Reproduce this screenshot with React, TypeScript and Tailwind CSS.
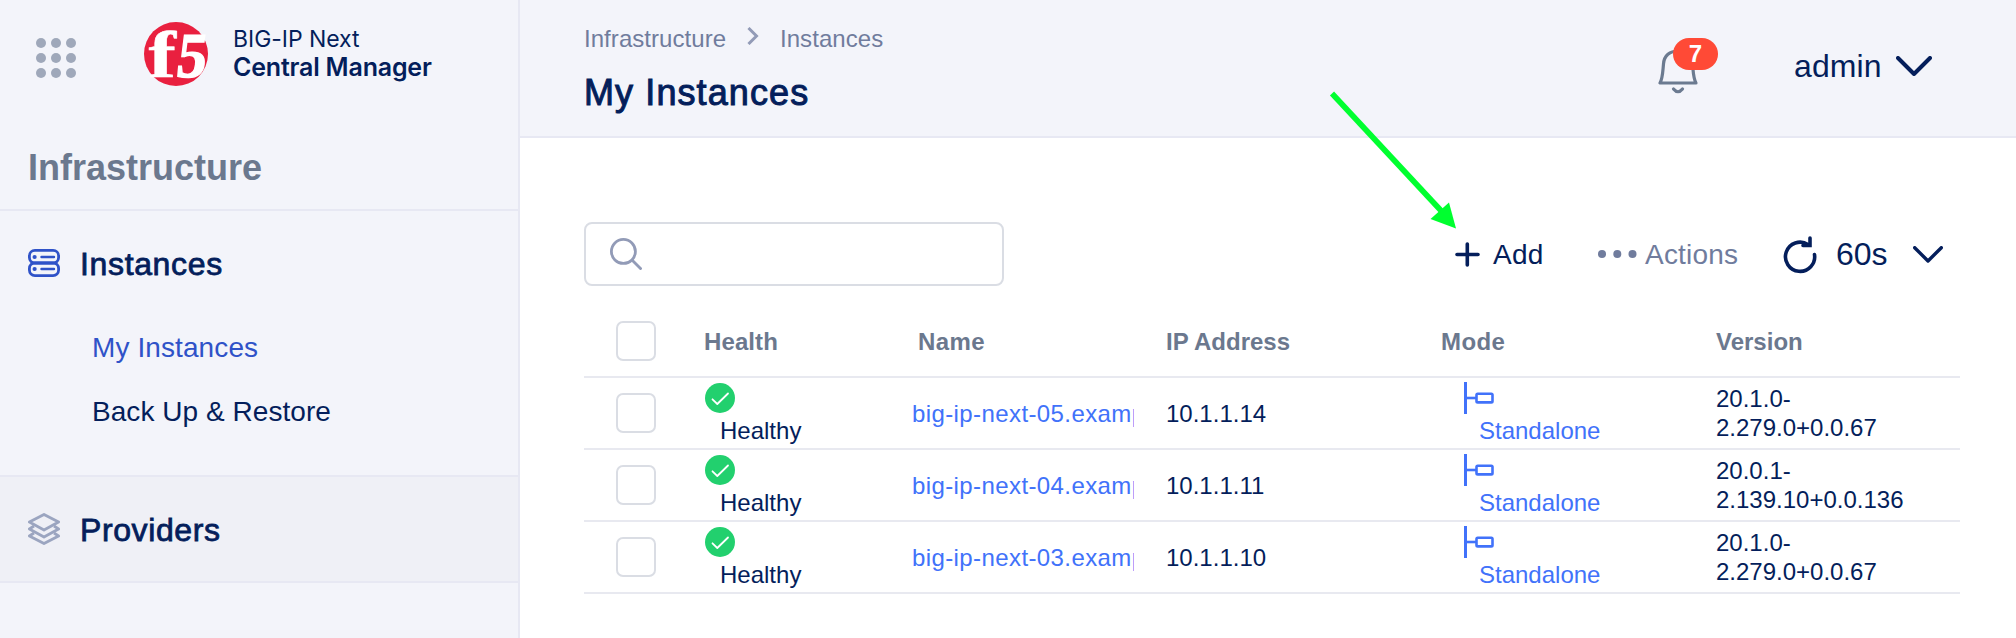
import type { ReactNode } from "react";

const NAVY = "#041e5b";

function Checkbox() {
  return <span className="block size-10 rounded-[7px] border-2 border-[#dadde4] bg-white" />;
}

function Check() {
  return (
    <svg width="30" height="30" viewBox="0 0 30 30" className="ml-px block" fill="none">
      <circle cx="15" cy="15" r="15" fill="#22d06e" />
      <path d="M7.5 16.3 12.3 21 23 10.5" stroke="#fff" strokeWidth="1.8" strokeLinecap="round" strokeLinejoin="round" />
    </svg>
  );
}

function Standalone() {
  return (
    <svg width="30" height="32" viewBox="0 0 30 32" className="ml-px block" fill="none" stroke="#4172fa">
      <path d="M1.500 0V32" strokeWidth="3" />
      <path d="M2 16H12" strokeWidth="2.600" />
      <rect x="12.500" y="11.800" width="16" height="8.600" rx="1.200" strokeWidth="2.600" />
    </svg>
  );
}

const rows = [
  ["big-ip-next-05.examp", "10.1.1.14", "20.1.0-", "2.279.0+0.0.67"],
  ["big-ip-next-04.examp", "10.1.1.11", "20.0.1-", "2.139.10+0.0.136"],
  ["big-ip-next-03.examp", "10.1.1.10", "20.1.0-", "2.279.0+0.0.67"],
];

const grid = "grid grid-cols-[120px_208px_254px_275px_275px_244px]";

function Head({ children, className = "" }: { children: ReactNode; className?: string }) {
  return <div className={"pt-[22px] text-[24px] leading-7 font-bold text-[#6b788e] " + className}>{children}</div>;
}

export default function App() {
  return (
    <div className="relative flex h-[638px] w-[2016px] overflow-hidden bg-white font-['Liberation_Sans',Arial,sans-serif] text-[#041e5b]">
      <aside className="flex w-[520px] shrink-0 flex-col border-r-2 border-[#e7e8f3] bg-[#f3f4fa]">
        <div className="flex h-[130px] shrink-0">
          <svg width="40" height="40" viewBox="0 0 40 40" className="mt-[38px] ml-9 shrink-0" fill="#9fa8ba">
            {[5, 20, 35].map((y) => [5, 20, 35].map((x) => <circle key={x + "-" + y} cx={x} cy={y} r="5" />))}
          </svg>
          <svg width="64" height="64" viewBox="0 0 64 64" className="mt-[22px] ml-[68px] shrink-0 overflow-visible">
            <circle cx="32" cy="32" r="32" fill="#e9203f" />
            <g fill="#fff" stroke="#fff" strokeWidth="0.500" className="font-['Liberation_Serif',serif] font-bold">
              <text transform="translate(4.500 54.500) scale(1.250 1)" fontSize="66">f</text>
              <text transform="translate(31 54.500) skewX(-7) scale(0.930 1)" fontSize="64" strokeWidth="1.400">5</text>
            </g>
          </svg>
          <div className="ml-[25px] pt-[25px] font-['Inter',sans-serif] leading-7">
            <div className="text-[23px] tracking-[-0.05px]">BIG-IP Next</div>
            <div className="text-[25px] font-semibold tracking-[-0.2px]">Central Manager</div>
          </div>
        </div>
        <div className="h-[81px] shrink-0 border-b-2 border-[#e7e8f3] pt-[18px] pl-7 text-[36px] leading-10 font-bold text-[#6b788e]">Infrastructure</div>
        <div className="h-[266px] shrink-0 border-b-2 border-[#e7e8f3] pl-7">
          <div className="flex items-center gap-5 pt-[33px]">
            <svg width="32" height="28" viewBox="0 0 32 28" className="-mt-[2px]" fill="none" stroke="#2f52c8" strokeWidth="2.800">
              <rect x="1.400" y="1.400" width="29.200" height="12.600" rx="5.500" />
              <rect x="1.400" y="14" width="29.200" height="12.600" rx="5.500" />
              <path d="M13.500 8H26M13.500 20H26" strokeWidth="2.400" strokeLinecap="round" />
              <circle cx="6.600" cy="8" r="2.100" fill="#2f52c8" stroke="none" />
              <circle cx="6.600" cy="20" r="2.100" fill="#2f52c8" stroke="none" />
            </svg>
            <span className="text-[32px] leading-10 tracking-[0.65px] [-webkit-text-stroke:0.8px]">Instances</span>
          </div>
          <div className="pt-[48px] pl-16 text-[28px] leading-8 tracking-[0.1px] text-[#2f52c8]">My Instances</div>
          <div className="pt-8 pl-16 text-[28px] leading-8 tracking-[0.05px]">Back Up &amp; Restore</div>
        </div>
        <div className="flex h-[106px] shrink-0 items-center gap-5 border-b-2 border-[#e7e8f3] bg-[#eff0f6] pl-7">
          <svg width="32" height="32" viewBox="0 0 32 32" fill="none" stroke="#9ba5c0" strokeWidth="2.800" strokeLinejoin="round">
            <path d="M16 1.400 30.600 9 16 17 1.400 9Z" />
            <path d="M6 13 1.400 16 16 24 30.600 16 26 13" />
            <path d="M6 20 1.400 23 16 30.600 30.600 23 26 20" />
          </svg>
          <span className="pt-px text-[32px] leading-10 tracking-[0.6px] [-webkit-text-stroke:0.8px]">Providers</span>
        </div>
      </aside>

      <main className="flex min-w-0 flex-1 flex-col">
        <header className="flex h-[138px] shrink-0 border-b-2 border-[#e7e8f3] bg-[#f3f4fa] pl-16">
          <div className="w-[1074px] pt-6">
            <div className="flex text-[24px] leading-[30px] tracking-[0.05px] text-[#707c9d]">
              <span className="w-[163px]">Infrastructure</span>
              <svg width="12" height="18" viewBox="0 0 12 18" className="mt-[3px] mr-[21px]" fill="none" stroke="#929bb7" strokeWidth="3">
                <path d="M1.500 1 9.500 9 1.500 17" />
              </svg>
              <span>Instances</span>
            </div>
            <h1 className="pt-[19px] text-[36px] leading-10 tracking-[1.1px] [-webkit-text-stroke:1px]">My Instances</h1>
          </div>
          <div className="relative mt-[38px] h-16 w-[136px]">
            <svg width="40" height="46" viewBox="0 0 40 46" className="mt-[11px]" fill="none" stroke="#6b7a90" strokeWidth="3.200" strokeLinecap="round" strokeLinejoin="round">
              <path d="M2 34H38C35.500 30 35.500 26 34.500 15C34 6.500 28 2 20 2S6 6.500 5.500 15C4.500 26 4.500 30 2 34Z" />
              <path d="M15.500 40Q20 45.500 24.500 40" />
            </svg>
            <span className="absolute top-0 left-[15px] flex h-8 w-[45px] items-center justify-center rounded-full bg-[#ff4a36] text-[24px] font-bold text-white">7</span>
          </div>
          <div className="flex h-[132px] items-center gap-[14px] text-[32px] tracking-[0.1px]">
            admin
            <svg width="36" height="20" viewBox="0 0 36 20" fill="none" stroke={NAVY} strokeWidth="4" strokeLinecap="round" strokeLinejoin="round">
              <path d="M2 2 18 18 34 2" />
            </svg>
          </div>
        </header>

        <section className="mt-[84px] ml-16 flex h-16 w-[1376px] shrink-0 items-center">
          <div className="h-16 w-[420px] shrink-0 rounded-lg border-2 border-[#dadde4] pt-[14px] pl-6">
            <svg width="32" height="32" viewBox="0 0 32 32" fill="none" stroke="#929bb7" strokeWidth="2.800">
              <circle cx="13.400" cy="13.400" r="12" />
              <path d="M22 22 31.500 31.500" />
            </svg>
          </div>
          <div className="ml-[451px] flex w-[143px] items-center gap-[13px] text-[28px] tracking-[0.3px]">
            <svg width="25" height="25" viewBox="0 0 25 25" fill="none" stroke={NAVY} strokeWidth="3.600" strokeLinecap="round"><path d="M12.300 2V23M2 12.500H23" /></svg>
            <span className="pt-px">Add</span>
          </div>
          <div className="flex w-[184px] items-center gap-[7px] text-[28px] tracking-[0.2px] text-[#707c9d]">
            <svg width="40" height="8" viewBox="0 0 40 8" className="shrink-0" fill="#707c9d"><circle cx="4" cy="4" r="4" /><circle cx="19.300" cy="4" r="4" /><circle cx="34.500" cy="4" r="4" /></svg>
            <span className="pt-px">Actions</span>
          </div>
          <svg width="34" height="36" viewBox="0 0 34 36" className="shrink-0 overflow-visible" fill="none" stroke={NAVY} strokeWidth="3.600" strokeLinecap="round">
            <path d="M26 8.500A14.600 14.600 0 1 0 32.500 18.500" />
            <path d="M28 2V9.500H21" />
          </svg>
          <span className="ml-5 w-[77px] text-[32px]">60s</span>
          <svg width="30" height="17" viewBox="0 0 30 17" fill="none" stroke={NAVY} strokeWidth="3.400" strokeLinecap="round" strokeLinejoin="round"><path d="M1.700 1.700 15 15 28.300 1.700" /></svg>
        </section>

        <section className="mt-[20px] ml-16 w-[1376px]">
          <div className={grid + " h-[72px] border-b-2 border-[#e8e9f0]"}>
            <div className="pt-[15px] pl-8"><Checkbox /></div>
            <Head className="tracking-[0.1px]">Health</Head>
            <Head className="pl-[6px] tracking-[0.4px]">Name</Head>
            <Head>IP Address</Head>
            <Head className="tracking-[0.4px]">Mode</Head>
            <Head>Version</Head>
          </div>
          {rows.map(([name, ip, v1, v2]) => (
            <div key={ip} className={grid + " h-[72px] border-b-2 border-[#e8e9f0] text-[24px] leading-7"}>
              <div className="pt-[15px] pl-8"><Checkbox /></div>
              <div className="pt-[5px]">
                <Check />
                <div className="pt-[4px] pl-4">Healthy</div>
              </div>
              <div className="mt-[22px] h-8 w-[222px] overflow-hidden tracking-[0.4px] whitespace-nowrap text-[#4172fa]">{name}</div>
              <div className="pt-[22px]">{ip}</div>
              <div className="pt-[4px] pl-[22px] text-[#4172fa]">
                <Standalone />
                <div className="pt-[3px] pl-4">Standalone</div>
              </div>
              <div className="pt-[6px] leading-[29px]">{v1}<br />{v2}</div>
            </div>
          ))}
        </section>
      </main>

      <svg width="130" height="142" viewBox="0 0 130 142" className="absolute top-[90px] left-[1328px]">
        <path d="M4 3.500 118 126" stroke="#00ff2f" strokeWidth="5.600" />
        <path d="M128 138.500 121 112.500 102.500 129Z" fill="#00ff2f" />
      </svg>
    </div>
  );
}
